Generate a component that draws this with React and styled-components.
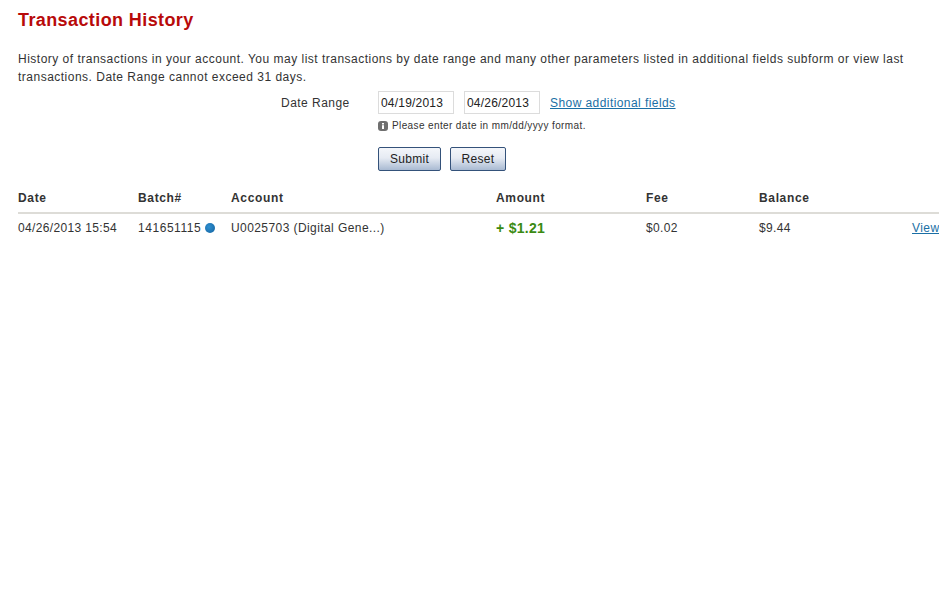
import React from "react";
import styled, { createGlobalStyle } from "styled-components";

const Global = createGlobalStyle`
  html, body { margin: 0; padding: 0; background: #fff; }
  body { font-family: "Liberation Sans", Arial, sans-serif; color: #333; }
`;
const Page = styled.main`
  width: 939px;
  height: 600px;
  overflow: hidden;
  box-sizing: border-box;
  padding: 9px 0 0 18px;
`;
const Title = styled.h1`
  margin: 0;
  font-size: 18px;
  line-height: 22px;
  font-weight: 700;
  color: #b80a0a;
  letter-spacing: 0.4px;
`;
const Intro = styled.p`
  margin: 19px 18px 0 0;
  font-size: 12px;
  line-height: 18px;
  letter-spacing: 0.49px;
  color: #333;
`;
const Form = styled.form`
  display: grid;
  grid-template-columns: 97px auto;
  justify-content: start;
  margin: 4px 0 0 263px;
`;
const Label = styled.label`
  padding-top: 1px;
  font-size: 12px;
  line-height: 24px;
  letter-spacing: 0.47px;
`;
const Fields = styled.div`
  display: flex;
  align-items: center;
`;
const DateInput = styled.input`
  box-sizing: border-box;
  width: 76px;
  height: 23px;
  margin-right: 10px;
  padding: 1px 2px;
  border: 1px solid #dcdcdc;
  font: 12px "Liberation Sans", Arial, sans-serif;
  letter-spacing: 0.2px;
  color: #222;
`;
const Link = styled.a`
  color: #1a6fa5;
  text-decoration: underline;
  font-size: 12px;
  letter-spacing: 0.43px;
`;
const Hint = styled.div`
  grid-column: 2;
  display: flex;
  align-items: center;
  gap: 4px;
  margin-top: 4px;
  font-size: 10px;
  line-height: 14px;
  letter-spacing: 0.38px;
`;
const Buttons = styled.div`
  grid-column: 2;
  display: flex;
  gap: 9px;
  margin-top: 14px;
`;
const Button = styled.button`
  box-sizing: border-box;
  height: 24px;
  width: ${p => p.$w}px;
  padding: 0;
  border: 1px solid #34527a;
  border-radius: 2px;
  background: linear-gradient(#f4f6fa, #e6ebf3 45%, #a9bad2);
  font: 12px "Liberation Sans", Arial, sans-serif;
  letter-spacing: 0.3px;
  color: #222;
`;
const Row = styled.div`
  display: grid;
  grid-template-columns: 120px 93px 265px 150px 113px 153px 60px;
  width: 954px;
  font-size: 12px;
  align-items: center;
`;
const Head = styled(Row)`
  margin-top: 13px;
  height: 28px;
  width: 921px;
  grid-template-columns: 120px 93px 265px 150px 113px 153px 27px;
  border-bottom: 2px solid #dddcd7;
  font-weight: 700;
  letter-spacing: 0.65px;
`;
const Body = styled(Row)`
  height: 28px;
  letter-spacing: 0.35px;
`;
const Spaced = styled.span`
  letter-spacing: 0.42px;
`;
const Batch = styled.span`
  display: flex;
  align-items: center;
  gap: 4px;
  letter-spacing: 0.55px;
`;
const Dot = styled.i`
  width: 10px;
  height: 10px;
  border-radius: 50%;
  background: radial-gradient(circle at 40% 40%, #2f8fd0, #12629f);
`;
const Amount = styled.span`
  color: #3a8a12;
  font-size: 14px;
  font-weight: 700;
  letter-spacing: 0.3px;
`;

const InfoIcon = () => (
  <svg width="10" height="10" viewBox="0 0 10 10">
    <rect x="0" y="0" width="10" height="10" rx="3" fill="#6f6f6f" />
    <rect x="4" y="2" width="2" height="1.5" fill="#fff" />
    <rect x="4" y="4.2" width="2" height="3.8" fill="#fff" />
  </svg>
);

export default function App() {
  return (
    <Page>
      <Global />
      <Title>Transaction History</Title>
      <Intro>
        History of transactions in your account. You may list transactions by date range and many other parameters listed in additional fields subform or view last transactions. Date Range cannot exceed 31 days.
      </Intro>
      <Form>
        <Label>Date Range</Label>
        <Fields>
          <DateInput defaultValue="04/19/2013" />
          <DateInput defaultValue="04/26/2013" />
          <Link href="#">Show additional fields</Link>
        </Fields>
        <Hint><InfoIcon />Please enter date in mm/dd/yyyy format.</Hint>
        <Buttons>
          <Button type="button" $w={63}>Submit</Button>
          <Button type="button" $w={56}>Reset</Button>
        </Buttons>
      </Form>
      <Head>
        <span>Date</span><span>Batch#</span><span>Account</span><span>Amount</span><span>Fee</span><span>Balance</span><span />
      </Head>
      <Body>
        <span>04/26/2013 15:54</span>
        <Batch>141651115<Dot /></Batch>
        <Spaced>U0025703 (Digital Gene...)</Spaced>
        <Amount>+ $1.21</Amount>
        <span>$0.02</span>
        <span>$9.44</span>
        <Link href="#">View</Link>
      </Body>
    </Page>
  );
}
